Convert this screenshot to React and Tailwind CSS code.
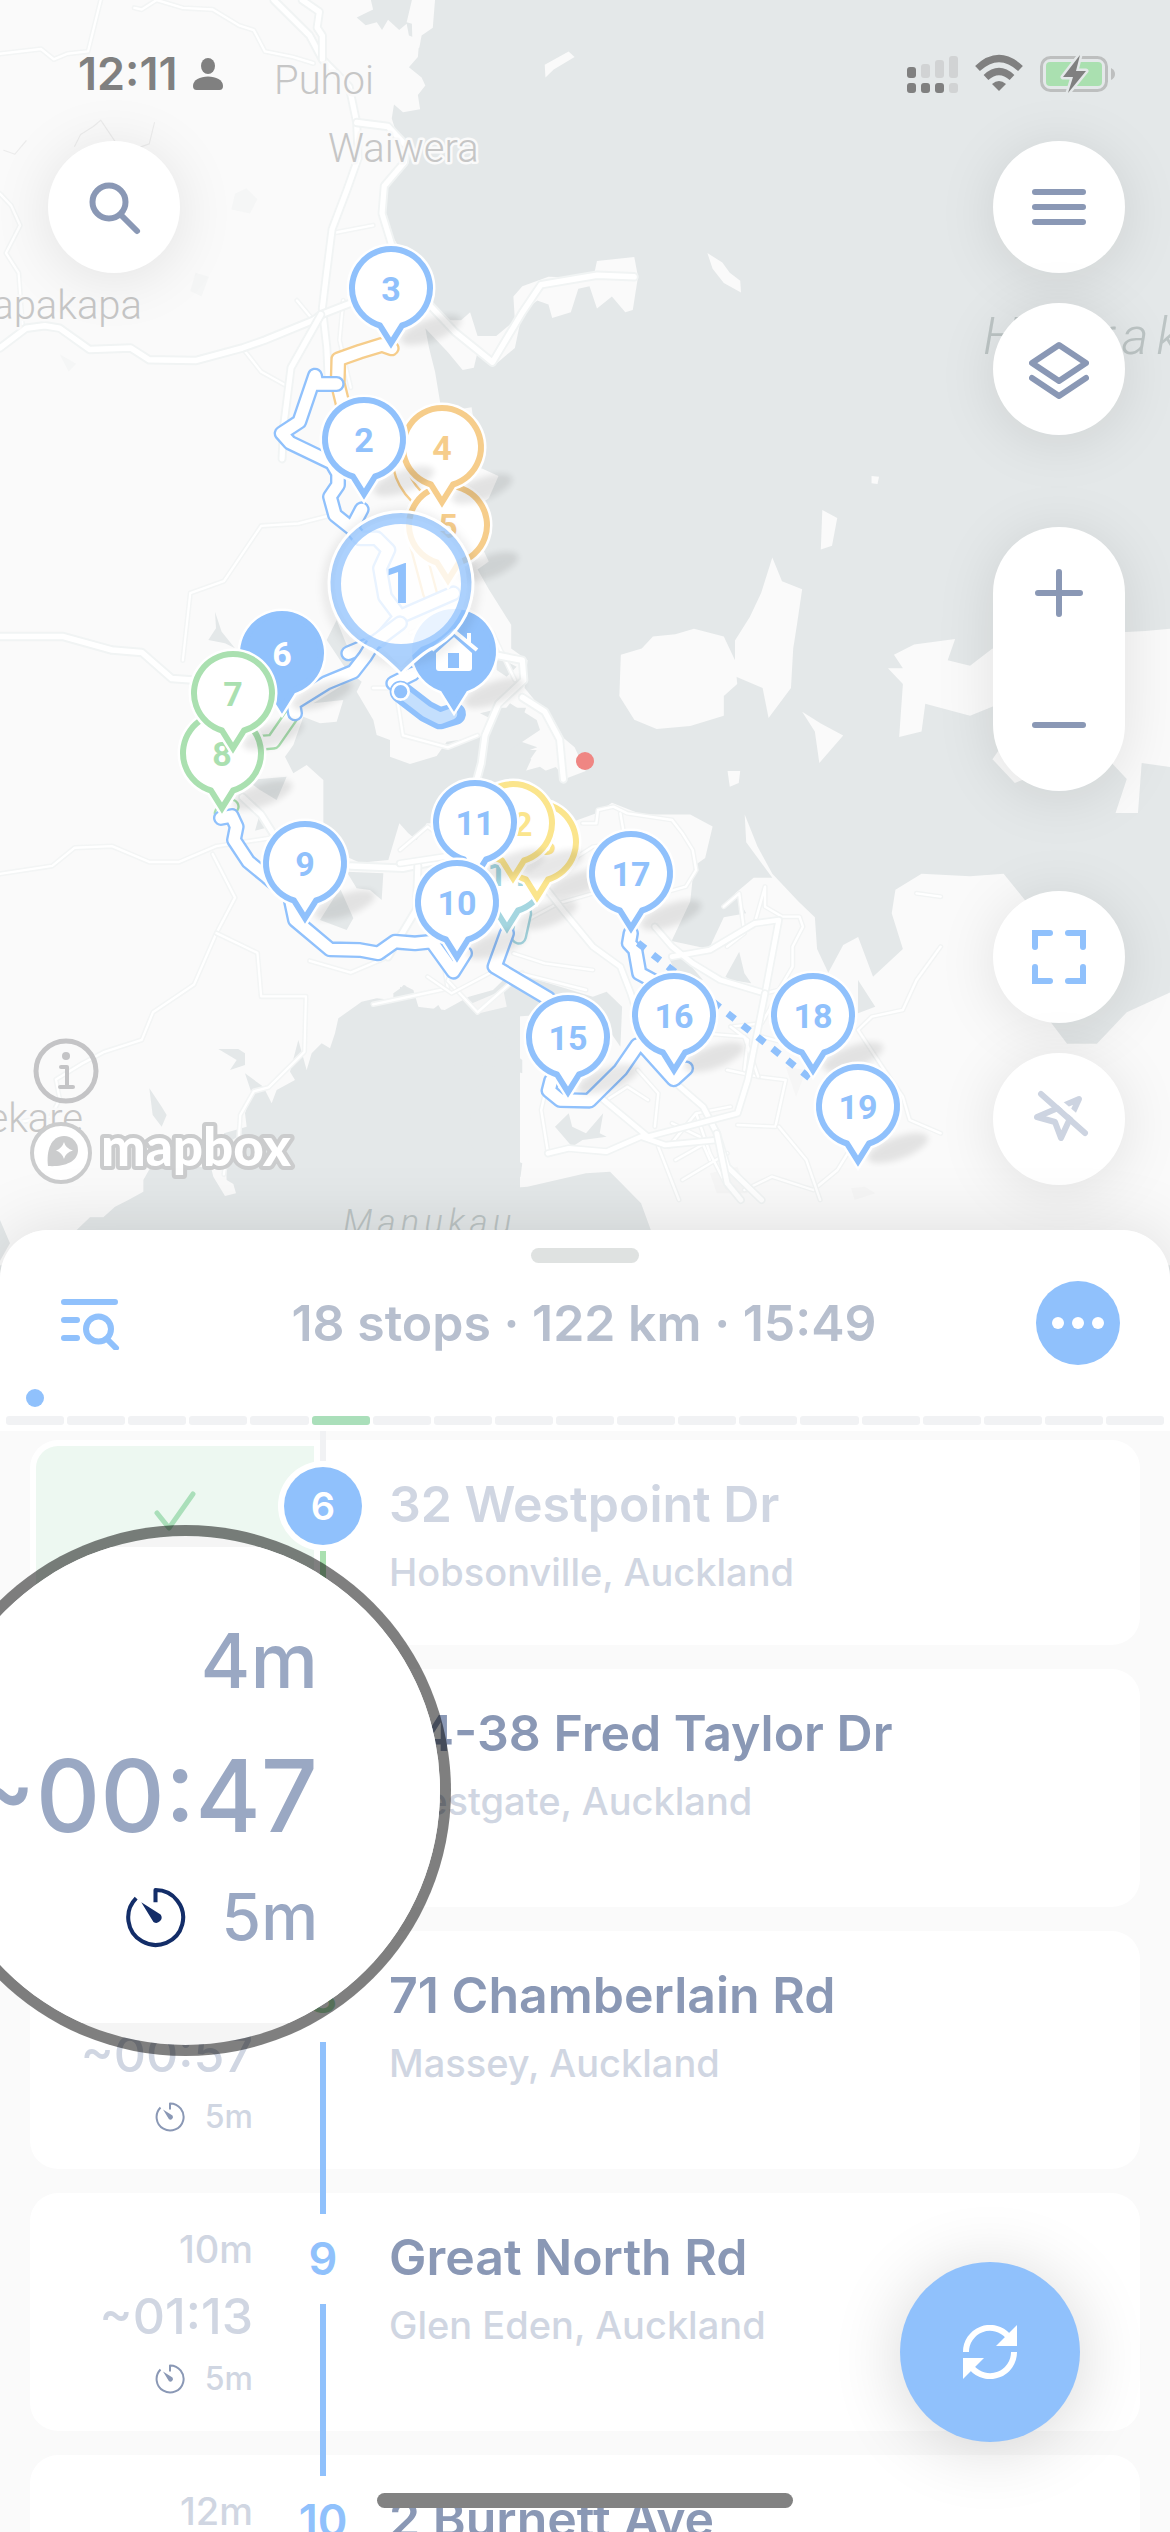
import React from "react";

const BLUE = "#90c1fc";
const GREEN = "#aae0b0";
const ORANGE = "#f6cd8b";
const YELLOW = "#fbe58d";
const TEAL = "#a5d6e0";
const SEA = "#e4e8e9";
const LAND = "#fafafa";

const pins = [
  { n: "14", x: 507, y: 873, c: TEAL },
  { n: "13", x: 537, y: 842, c: YELLOW },
  { n: "12", x: 513, y: 823, c: YELLOW },
  { n: "11", x: 475, y: 822, c: BLUE },
  { n: "10", x: 457, y: 902, c: BLUE },
  { n: "5", x: 448, y: 525, c: ORANGE },
  { n: "4", x: 442, y: 447, c: ORANGE },
  { n: "3", x: 391, y: 288, c: BLUE },
  { n: "2", x: 364, y: 439, c: BLUE },
  { n: "6", x: 282, y: 653, c: BLUE, solid: true },
  { n: "8", x: 222, y: 753, c: GREEN },
  { n: "7", x: 233, y: 693, c: GREEN },
  { n: "9", x: 305, y: 863, c: BLUE },
  { n: "17", x: 631, y: 873, c: BLUE },
  { n: "16", x: 674, y: 1015, c: BLUE },
  { n: "15", x: 568, y: 1037, c: BLUE },
  { n: "18", x: 813, y: 1015, c: BLUE },
  { n: "19", x: 858, y: 1106, c: BLUE },
  { n: "", x: 454, y: 651, c: BLUE, solid: true, home: true },
];

const PIN_SHAPE = "M-11 37.5A39 39 0 1 1 11 37.5L0 55Z";

function Pin({ n, x, y, c, solid, home }) {
  return (
    <g transform={`translate(${x} ${y})`}>
      <ellipse cx="40" cy="42" rx="32" ry="11" transform="rotate(-20 40 42)" fill="#000" opacity="0.09" filter="url(#soft)" />
      <path d={PIN_SHAPE} fill="#fff" stroke="#fff" strokeWidth="11" />
      <path d={PIN_SHAPE} fill={solid ? c : "#fff"} stroke={c} strokeWidth="6" />
      {home ? (
        <g>
          <path d="M-18 2 0-14 18 2V17a3 3 0 0 1-3 3H-15a3 3 0 0 1-3-3Z" fill="#fff" />
          <path d="M-22-1 0-20 23-1M15-8V-18" fill="none" stroke="#fff" strokeWidth="4" />
          <rect x="-6" y="2" width="11" height="15" fill={c} />
        </g>
      ) : (
        <text x="0" y="13" textAnchor="middle" fontSize="34" fontWeight="700" fill={solid ? "#fff" : c}>
          {n}
        </text>
      )}
    </g>
  );
}

const majorRoads = [
  "M367 0 415 45 432 75 468 110 478 155 480 200 465 240 445 290 437 350 432 390 438 440 440 480",
  "M405 0 428 15 425 35 432 45 432 75",
  "M478 155 520 160 545 185 542 205 515 235 512 270 525 310",
  "M0 440 35 415 60 412 80 415 120 442 175 440 200 455 262 456 325 440 355 430 420 405 430 398 520 365",
  "M430 398 390 465 380 540 378 580",
  "M0 805 85 805 150 822 190 825 230 858 258 860",
  "M560 370 610 420 660 458 700 395 725 360 800 348 850 350",
  "M620 820 700 835 702 860 668 890 650 930 645 965 635 1000 625 1040",
  "M700 882 730 900 750 935 755 985",
  "M470 1095 540 1098 590 1088",
  "M560 1095 558 1150 520 1210",
  "M325 1008 350 1030 370 1060",
];
const minorRoads = [
  "M135 0 118 65 90 68 72 75 55 62 0 68",
  "M180 10 190 12 210 0 245 10 285 12 320 32 340 38 355 65 392 72 420 80",
  "M0 245 15 260 27 285 8 320 25 345 30 410",
  "M398 380 420 405M325 440 350 470 388 490",
  "M460 380 455 430 470 490M445 295 500 285",
  "M245 835 255 750 300 735 350 665 400 662 450 650",
  "M0 1105 70 1095 100 1072 150 1070 200 1090 240 1090 290 1070 360 1060",
  "M285 1080 315 1135 290 1180 260 1245 205 1280 190 1315 140 1330 110 1345 75 1365 80 1390 68 1412 20 1420 0 1405",
  "M290 1180 345 1205 350 1260 410 1260 408 1330 360 1375 340 1380 322 1410 320 1440 305 1450 300 1485",
  "M520 1210 470 1230 415 1215M590 1190 600 1250 500 1270",
  "M630 1180 600 1240 640 1280 700 1230",
  "M500 870 530 870 540 930 600 945 640 930",
  "M550 800 600 780 660 800 690 860",
];

function MapArt() {
  return (
    <svg
      className="absolute inset-0 h-full w-full"
      viewBox="0 0 1170 1280"
      preserveAspectRatio="xMidYMin slice"
      fontFamily='Roboto, "Liberation Sans", sans-serif'
      role="img"
      aria-label="Route map of Auckland with numbered stops"
    >
      <defs>
        <filter id="soft" x="-50%" y="-80%" width="200%" height="260%">
          <feGaussianBlur stdDeviation="3" />
        </filter>
        <filter id="halo" x="-50%" y="-50%" width="200%" height="200%">
          <feGaussianBlur stdDeviation="5" />
        </filter>
      </defs>
      <rect width="1170" height="1280" fill={SEA} />

      <g transform="scale(.7462 .7908)" fill={LAND}>
        <path d="M0 0H497L500 12 478 22 490 32 505 28 512 38 520 25 535 38 545 30 548 45 562 50 560 72 548 85 565 98 570 108 560 120 563 138 540 142 528 132 525 150 535 180 540 212 522 225 512 250 512 280 530 305 575 385 600 405 618 405 630 395 640 425 665 425 690 405 688 375 700 362 735 350 795 352 800 330 850 325 855 350 848 392 838 395 820 375 800 390 790 362 775 365 765 395 740 402 735 385 720 380 700 395 690 440 665 460 640 445 635 465 620 468 600 445 570 415 575 440 583 470 590 510 615 520 612 540 640 590 668 602 655 630 640 640 640 680 655 710 640 720 655 745 685 790 685 820 707 835 703 870 725 895 745 925 770 945 785 975 757 985 745 970 700 985 712 960 690 955 720 945 690 935 705 895 670 895 655 935 640 1000 660 1040 700 1060 765 1040 800 1028 820 1015 860 1030 925 1030 955 1045 945 1085 930 1095 925 1140 900 1190 950 1200 970 1160 1000 1155 985 1130 1010 1110 1035 1110 1000 1065 998 1030 1015 1070 1035 1105 1070 1140 1092 1160 1095 1200 1110 1230 1130 1195 1150 1185 1170 1235 1210 1200 1195 1155 1200 1125 1235 1105 1300 1108 1345 1105 1375 1140 1400 1200 1420 1230 1390 1270 1430 1320 1470 1320 1510 1280 1568 1255V1600H0Z" />
        <path d="M552 0H583L580 35 565 45 562 60 553 65 552 30 545 28ZM730 82 762 65 770 72 742 88 731 98ZM948 320 968 332 978 345 992 355 993 370 970 358 955 340Z" />
        <path d="M832 828 860 820 875 805 905 802 930 795 970 805 985 835 988 865 970 880 970 905 925 918 880 922 850 910 830 880Z" />
        <path d="M985 810 1005 780 1020 750 1035 705 1048 735 1075 745 1068 790 1063 820 1060 870 1030 908 1022 870 985 855Z" />
        <path d="M1075 900 1100 915 1130 930 1098 965 1092 925ZM975 975 992 975 990 990 978 995ZM1102 645 1122 655 1115 690 1100 695ZM1168 602 1178 603 1176 612 1168 611ZM612 518 632 515 635 535 615 540Z" />
        <path d="M1190 845 1210 845 1198 828 1225 815 1280 808 1270 835 1300 842 1330 820 1350 835 1365 880 1300 905 1240 890 1235 925 1205 932 1210 865Z" />
        <path d="M1490 800 1535 798 1568 795V970L1530 965 1525 1028 1495 1028 1510 985 1500 975 1480 955 1440 960 1360 990 1330 960 1360 920 1340 830Z" />
      </g>

      <g transform="translate(160 560) scale(.33333)" fill={SEA}>
        <path d="M530 180 500 240 560 330 605 365 590 395 640 480 650 525 690 540 690 590 750 612 830 588 860 545 960 530 1010 480 1050 430 1130 480 1140 510 1050 570 1130 570 1085 635 1140 620 1200 662 1290 640 1320 560V740L1240 780 1130 800 1000 820 880 790 800 790 770 840 745 820 718 790 685 900 600 908 560 890 490 800 490 660 440 615 400 640 375 590 400 555 430 470 480 490 530 485 550 420 460 430 540 380 590 330Z" />
        <path d="M165 155 185 215 225 265 195 250 145 240 168 205ZM260 660 380 650 350 720 300 690ZM300 760 330 800 285 812ZM560 935 670 940 665 1020 630 990 590 985ZM540 985 580 1075 560 1110 480 1080ZM700 1300 735 1275 765 1320H700ZM1010 290 1070 320 1040 350 1010 330ZM960 460 1000 450 990 475Z" />
      </g>
      <g transform="translate(0 980) scale(.33333)" fill={SEA}>
        <path d="M-10 740 0 720 30 790-10 860ZM230 750 270 712 310 712 345 680 385 660 430 635 430 600 450 565 600 560 635 570 640 590 675 648 708 640 700 612 680 600 672 460 740 440 735 400 755 340 735 280 790 320 815 370 830 330 885 300 870 275 895 180 920 270 935 220 965 190 990 205 1005 160 1015 115 1085 65 1130 55 1180 60 1210 15 1240 30 1255 80 1290 95 1315 75 1330 100 1400 60 1560 80V900H100ZM655 207 715 207 735 220 735 255 690 270 710 240ZM448 325 485 380 500 405 485 440 458 405Z" />
      </g>
      <g transform="translate(400 760) scale(.34437 .33333)">
        <path fill={SEA} d="M0 680 20 690 50 740 130 750 200 710 270 690 300 660 370 650 560 710 600 695 645 740 640 860 600 800 480 760 330 770 265 800 270 830 310 850 330 880 355 900 355 940 290 920 160 910 155 940 210 990 260 960 300 980 270 1040 205 1060 200 1150 240 1190 310 1190 355 1210 350 1250 310 1285 370 1280 540 1240 610 1235 700 1330 760 1500H0Z" />
        <path fill={SEA} d="M450 1100 490 1060 500 1100 540 1120 590 1060 580 1120 600 1130 530 1140 500 1160ZM945 650 985 575 1000 640 1020 670 960 660ZM780 590 830 600 880 660 800 640ZM1330 660 1380 740 1330 760Z" />
        <path fill="#f6f6f6" d="M210 730 300 690 310 740 230 760ZM900 1240 980 1220 1010 1300 920 1300ZM1120 920 1180 930 1150 1010ZM1310 1285 1350 1280 1380 1300 1320 1320Z" />
      </g>

      <g transform="scale(.7462 .7908)" fill="none" strokeLinejoin="round" strokeLinecap="round">
        {[...minorRoads].map((d) => (
          <g key={d}>
            <path d={d} stroke="#f3f5f5" strokeWidth="7" />
            <path d={d} stroke="#fff" strokeWidth="3" />
          </g>
        ))}
        {majorRoads.map((d) => (
          <g key={d}>
            <path d={d} stroke="#f1f4f4" strokeWidth="12" />
            <path d={d} stroke="#fff" strokeWidth="7" />
          </g>
        ))}
        <path d="M100 185 108 170 125 160 135 152 155 180 170 192 200 182 207 155M5 190 20 195 35 178" stroke="#ececec" strokeWidth="1.5" />
        <path d="M315 245 330 238 345 252 335 270 310 265ZM262 345 280 350 270 375 255 368ZM80 448 102 460 92 470Z" fill="#f5f6f6" />
      </g>
      <g transform="translate(400 760) scale(.34437 .33333)" fill="none" strokeLinejoin="round" strokeLinecap="round">
        {[
          "M530 190 570 190 575 150 620 140 660 160 790 180 820 220 850 270 860 330 830 380 760 400M640 160 650 220 600 260M0 270 80 200 120 230M760 400 700 450M500 300 560 260 700 240",
          "M940 440 985 400 1000 520 950 560M1060 380 1060 440 1110 470 1160 470 1170 500 1140 560 1140 620 1100 690 1060 700M1060 380 1030 490",
          "M1570 410 1500 400M1570 560 1500 660 1460 750 1370 770 1330 810 1400 920 1460 1010 1480 1080 1570 1120",
          "M960 800 1050 790 1100 700M950 930 1040 950 1120 960 1090 1100 980 1095M780 1160 860 1060 960 1040M790 1090 870 1130 900 1200M750 1160 810 1320M860 1060 900 1180 950 1280M800 1200 920 1130M820 1260 950 1180M1000 1290 1080 1250 1200 1290 1270 1230 1300 1180",
          "M690 930 750 1000 740 1100M430 1180 410 1050 430 960M600 1020 660 980 720 1020M330 580 420 610 560 630M350 640 540 690M370 480 460 430 560 400M80 650 150 700 260 640M1100 1100 1180 1200 1220 1320",
          "M1000 930 1010 840 960 800M1050 830 1160 860M880 820 1000 830 1040 950",
        ].map((d) => (
          <g key={d}>
            <path d={d} stroke="#f2f4f4" strokeWidth="15" />
            <path d={d} stroke="#fff" strokeWidth="7" />
          </g>
        ))}
        {[
          "M0 310 130 290 290 310 420 380 480 460 560 560 640 620 670 700 700 800 790 960 880 1040 920 1120 950 1220 1050 1320",
          "M740 500 790 560 850 610 930 660 1060 700 1100 480 1030 490 900 570 790 590",
          "M430 1180 490 1165 600 1175 700 1130 770 1155 920 1140M580 1010 720 1130 980 1060 1010 960 1060 700",
          "M920 1120 950 1270 990 1320",
        ].map((d) => (
          <g key={d}>
            <path d={d} stroke="#f1f4f4" strokeWidth="24" />
            <path d={d} stroke="#fff" strokeWidth="14" />
          </g>
        ))}
      </g>

      <g fontSize="40" fill="#c6c6c6" stroke="#fafafa" strokeWidth="5" paintOrder="stroke" strokeLinejoin="round" fontWeight="300">
        <text x="274" y="94">Puhoi</text>
        <text x="328" y="162">Waiwera</text>
        <text x="142" y="319" textAnchor="end">apakapa</text>
        <text x="83" y="1132" textAnchor="end">ekare</text>
      </g>
      <g fill="#bcc4c4" fontStyle="italic" fontWeight="300">
        <text x="343" y="1234" fontSize="35" letterSpacing="5">Manukau</text>
        <text x="983" y="354" fontSize="52" letterSpacing="8">Hauraki</text>
      </g>

      <g fill="none" strokeLinejoin="round" strokeLinecap="round">
        {[
          ["translate(200 220) scale(.33333)", ORANGE, "M575 385 545 375 480 395 415 418 413 490 430 560M600 740 Q610 790 650 830M650 970 690 1120"],
          ["translate(200 220) scale(.33333)", BLUE, "M410 492 350 492 345 467 298 605 245 640 270 668 395 728 414 760 414 795 390 830 405 885 455 925 485 868M455 925 480 955 530 955 565 990 540 1045 555 1130 600 1190 760 1120M600 1190 540 1260 445 1300"],
          ["translate(160 560) scale(.33333)", GREEN, "M392 470 340 545 280 550M185 760 215 740"],
          ["translate(160 560) scale(.33333)", BLUE, "M720 190 640 250 615 290 580 335 500 368 400 430 405 460M183 774 215 768 230 800 222 840 265 905 320 950 390 1010 405 1080 510 1168 600 1170 655 1180 705 1145 765 1150 815 1145 880 1235 915 1180M700 370 760 340"],
          ["translate(400 760) scale(.34437 .33333)", TEAL, "M330 480 360 460 345 530"],
          ["translate(400 760) scale(.34437 .33333)", BLUE, "M310 520 275 620 430 715 470 800M440 960 432 992 465 1020 550 1022 640 930 690 855M710 860 795 958 830 925M670 520 665 550 683 570 695 640 740 665 790 720"],
        ].map(([t, c, d], i) => (
          <g key={i} transform={t}>
            <path d={d} stroke={c} strokeWidth="48" />
            <path d={d} stroke="#fff" strokeWidth="34" />
          </g>
        ))}
        <path d="M638 943 815 1082" stroke={BLUE} strokeWidth="7" strokeDasharray="9 10" strokeLinecap="butt" />
        <g transform="translate(160 560) scale(.33333)">
          <path d="M722 395 800 455 840 475 885 462" stroke={BLUE} strokeWidth="66" />
          <path d="M722 395 800 455 840 475 875 462" stroke="#c4dffd" strokeWidth="34" />
          <circle cx="722" cy="395" r="24" fill={BLUE} stroke="#fff" strokeWidth="8" />
        </g>
      </g>
      <circle cx="585" cy="761" r="9" fill="#ef8683" />

      {pins.map((p, i) => (
        <Pin key={i} {...p} />
      ))}

      <g transform="translate(401 584)">
        <circle cx="0" cy="3" r="74" fill="none" stroke="#000" strokeOpacity=".12" strokeWidth="5" filter="url(#halo)" />
        <path d="M-20 63A66 66 0 1 1 20 63L0 82Z" fill="#fff" fillOpacity=".8" />
        <path d="M-32 64A72 72 0 1 1 32 64Q22 68 0 90Q-22 68-32 64Z M60 0A60 60 0 1 0-60 0A60 60 0 1 0 60 0Z" fillRule="evenodd" fill={BLUE} fillOpacity=".75" />
        <path d="M-32 64A72 72 0 1 1 32 64Q22 68 0 90Q-22 68-32 64Z" fill="none" stroke="#fff" strokeWidth="3" />
        <text x="-1" y="19" textAnchor="middle" fontSize="56" fontWeight="700" fill={BLUE}>1</text>
      </g>
    </svg>
  );
}

function StatusBar() {
  return (
    <div className="flex items-center justify-between pt-[44px] pr-[55px] pl-[78px] text-[#808080]">
      <div className="flex h-[60px] items-center gap-4">
        <span className="text-[45px] leading-[60px] font-semibold">12:11</span>
        <svg width="30" height="32" viewBox="0 0 30 32" fill="currentColor" aria-hidden="true">
          <ellipse cx="15" cy="8" rx="7" ry="8" />
          <path d="M0 28C0 22 7 18.500 15 18.500S30 22 30 28Q30 32 26.500 32H3.500Q0 32 0 28Z" />
        </svg>
      </div>
      <svg width="209" height="40" viewBox="0 0 209 40" fill="#808080" aria-hidden="true">
        <rect x="1" y="13" width="9" height="11" rx="3" />
        <g fill="#d1d3d4">
          <rect x="15" y="10" width="9" height="14" rx="3" />
          <rect x="29" y="6" width="9" height="18" rx="3" />
          <rect x="43" y="2" width="9" height="22" rx="3" />
          <rect x="43" y="29" width="9" height="10" rx="3" />
        </g>
        <rect x="1" y="29" width="9" height="10" rx="3" />
        <rect x="15" y="29" width="9" height="10" rx="3" />
        <rect x="29" y="29" width="9" height="10" rx="3" />
        <g fill="none" stroke="#808080" strokeWidth="7">
          <path d="M71.500 14.500Q93-5.500 114.500 14.500" />
          <path d="M80 23.500Q93 11.500 106 23.500" />
        </g>
        <path d="M86 30Q93 24 100 30L93 37Z" />
        <rect x="135.500" y="3.500" width="65" height="33" rx="9" fill="none" stroke="#bdbfbf" strokeWidth="3" />
        <path d="M205 14Q209 16 209 20T205 26Z" fill="#bdbfbf" />
        <rect x="140" y="8" width="56" height="24" rx="4" fill="#aae0b0" />
        <path d="M174 1 157 23H167L162 39 180 17H170Z" stroke={SEA} strokeWidth="5" paintOrder="stroke" strokeLinejoin="round" />
      </svg>
    </div>
  );
}

const ROUND =
  "flex size-[132px] items-center justify-center rounded-full bg-white text-[#8a98b5] shadow-[0_6px_60px_rgba(0,0,0,0.1)]";

function Icon({ children, width = 6 }) {
  return (
    <svg width="60" height="60" viewBox="0 0 60 60" fill="none" stroke="currentColor" strokeWidth={width} strokeLinecap="round" strokeLinejoin="round" aria-hidden="true">
      {children}
    </svg>
  );
}

function MapControls() {
  return (
    <div className="relative flex items-start justify-between pt-[37px] pr-[45px] pl-[48px]">
      <button className={ROUND} aria-label="Search">
        <Icon><circle cx="25" cy="25" r="16.500" /><path d="M37 38 53 54" /></Icon>
      </button>
      <div className="flex flex-col">
        <button className={ROUND} aria-label="Menu">
          <Icon><path d="M6 15H54M6 30H54M6 45H54" /></Icon>
        </button>
        <button className={ROUND + " mt-[30px]"} aria-label="Map layers">
          <Icon><path d="M30 6 57 24 30 42 3 24ZM3 39 30 57 57 39" /></Icon>
        </button>
        <div className="mt-[92px] flex w-[132px] flex-col rounded-full bg-white text-[#8a98b5] shadow-[0_6px_60px_rgba(0,0,0,0.1)]">
          <button className="flex h-[132px] items-center justify-center" aria-label="Zoom in">
            <Icon><path d="M9 30H51M30 9V51" /></Icon>
          </button>
          <button className="flex h-[132px] items-center justify-center" aria-label="Zoom out">
            <Icon><path d="M6 30H54" /></Icon>
          </button>
        </div>
        <button className={ROUND + " mt-[100px]"} aria-label="Fit route">
          <svg width="60" height="60" viewBox="0 0 60 60" fill="none" stroke={BLUE} strokeWidth="6" strokeLinecap="round" aria-hidden="true">
            <path d="M6 20V6H21M39 6H54V20M54 40V54H39M21 54H6V40" />
          </svg>
        </button>
        <button className={ROUND + " mt-[30px]"} aria-label="Location off">
          <svg width="60" height="60" viewBox="0 0 60 60" fill="none" stroke="#cdd4e1" strokeWidth="6" strokeLinejoin="round" aria-hidden="true">
            <path d="M8 28 50 10 32 49 26 33Z" />
            <path d="M16 1 60 39" stroke="#fff" strokeWidth="6" />
            <path d="M12 5 56 44" strokeLinecap="round" />
          </svg>
        </button>
      </div>
    </div>
  );
}

function Attribution() {
  return (
    <div className="absolute top-[1038px] left-[29px] flex flex-col gap-[17px]">
      <button aria-label="Map information" className="ml-1 size-[66px]">
        <svg width="66" height="66" viewBox="0 0 66 66" fill="none" stroke="#c4c4c6" strokeWidth="4" strokeLinecap="round" strokeLinejoin="round" aria-hidden="true">
          <circle cx="33" cy="33" r="30" strokeWidth="5" />
          <circle cx="33" cy="18" r="4" fill="#c4c4c6" stroke="none" />
          <path d="M28 29H34V49M27 49H40" />
        </svg>
      </button>
      <a href="#mapbox" className="block">
        <svg width="270" height="64" viewBox="0 0 270 64" role="img" aria-label="mapbox">
          <circle cx="32" cy="32" r="29" fill="#fff" stroke="#cbcccd" strokeWidth="4" />
          <path d="M19 45C17 30 22 15 35 15A14 14 0 0 1 49 29C49 42 33 46 19 45Z" fill="#cbcccd" />
          <path d="M35 21Q36.500 27.500 44 29.500Q36.500 31.500 35 38Q33 31.500 27 29.500Q33 27.500 35 21Z" fill="#fff" />
          <text x="72" y="45" fontFamily="Lato, sans-serif" fontWeight="900" fontSize="53" fill="#fff" stroke="#cbcccd" strokeWidth="8" strokeLinejoin="round" paintOrder="stroke">mapbox</text>
        </svg>
      </a>
    </div>
  );
}

function TimerIcon({ className }) {
  return (
    <svg className={className} viewBox="0 0 30 30" fill="none" stroke="currentColor" strokeWidth="2" aria-hidden="true">
      <path d="M15 7.500V1.500A13.500 13.500 0 1 1 5.500 5.500" strokeLinejoin="round" />
      <path d="M8 7.500 17.500 13.500A2.600 2.600 0 0 1 14 17.200Z" fill="currentColor" stroke="none" />
    </svg>
  );
}

function SheetHeader() {
  return (
    <header className="rounded-t-[48px] bg-white pt-[18px] pb-1.5">
      <div className="mx-auto h-[15px] w-[108px] rounded-full bg-[#dfe2e1]" />
      <div className="mt-[18px] grid grid-cols-[1fr_auto_1fr] items-center pr-[50px] pl-[48px]">
        <button className="flex size-[84px] items-center justify-center" aria-label="Search stops">
          <svg width="60" height="54" viewBox="0 0 60 54" fill="none" stroke={BLUE} strokeWidth="6" strokeLinecap="round" aria-hidden="true">
            <path d="M4 6H55M4 24H17M4 42H17M48 44 56 52" />
            <circle cx="38.500" cy="33" r="12.500" />
          </svg>
        </button>
        <h1 className="text-[50px] leading-[60px] font-semibold text-[#b7bfce]">18 stops · 122 km · 15:49</h1>
        <button className="flex size-[84px] items-center justify-center gap-2 justify-self-end rounded-full bg-[#90c1fc]" aria-label="More">
          <span className="size-3 rounded-full bg-white" />
          <span className="size-3 rounded-full bg-white" />
          <span className="size-3 rounded-full bg-white" />
        </button>
      </div>
      <div className="mt-6 ml-[26px] size-[18px] rounded-full bg-[#90c1fc]" />
      <div className="mt-[9px] flex gap-[3px] px-1.5">
        {Array.from({ length: 19 }, (_, i) => (
          <div key={i} className={"h-[9px] flex-1 rounded-[3px] " + (i === 5 ? "bg-[#aadfba]" : "bg-[#f1f2f4]")} />
        ))}
      </div>
    </header>
  );
}

const stops = [
  { n: 7, title: "34-38 Fred Taylor Dr", area: "Westgate, Auckland", drive: "4m", eta: "~00:47", num: "text-[#aae0b0]", line: "bg-[#aae0b0]" },
  { n: 8, title: "71 Chamberlain Rd", area: "Massey, Auckland", drive: "5m", eta: "~00:57", num: "text-[#aae0b0]", line: "bg-[#90c1fc]" },
  { n: 9, title: "Great North Rd", area: "Glen Eden, Auckland", drive: "10m", eta: "~01:13", num: "text-[#90c1fc]", line: "bg-[#90c1fc]" },
  { n: 10, title: "2 Burnett Ave", area: "Mount Roskill, Auckland", drive: "12m", eta: "~01:30", num: "text-[#90c1fc]", line: "bg-[#90c1fc]" },
];

function StopText({ title, area, dim }) {
  return (
    <div className="min-w-0 flex-1 pt-8 pl-[27px]">
      <h2 className={"text-[50px] leading-[64px] font-semibold whitespace-nowrap " + (dim ? "text-[#d0d6e2]" : "text-[#8a98b5]")}>{title}</h2>
      <p className="mt-3 text-[38px] leading-[48px] font-medium whitespace-nowrap text-[#d0d6e2]">{area}</p>
    </div>
  );
}

function StopList() {
  return (
    <ol className="flex flex-col gap-6 bg-[#fafafa] px-[30px] pt-[9px]">
      <li className="relative flex h-[205px] rounded-[28px] bg-white">
        <div className="m-1.5 mr-0 flex w-[278px] justify-center rounded-l-[22px] bg-[#edf8f1] pt-[44px]">
          <svg width="42" height="42" viewBox="0 0 42 42" fill="none" stroke="#aadfba" strokeWidth="5" strokeLinecap="round" strokeLinejoin="round" aria-label="Done">
            <path d="M3 23 15 38 39 4" />
          </svg>
        </div>
        <div className="relative -ml-[30px] flex w-[78px] flex-col items-center pt-[27px]">
          <div className="absolute -top-[9px] h-[30px] w-1.5 bg-[#f1f2f4]" />
          <div className="relative flex size-[78px] items-center justify-center rounded-full bg-[#90c1fc] text-[38px] font-semibold text-white ring-6 ring-white">6</div>
          <div className="absolute top-[111px] -bottom-[45px] z-10 w-1.5 bg-[#aae0b0]" />
        </div>
        <StopText title="32 Westpoint Dr" area="Hobsonville, Auckland" dim />
      </li>
      {stops.map((s) => (
        <li key={s.n} className="flex h-[238px] shrink-0 rounded-[28px] bg-white">
          <div className="flex w-[223px] flex-col gap-3 pt-8 text-right font-medium text-[#d0d6e2]">
            <div className="text-[38px] leading-[48px]">{s.drive}</div>
            <div className="text-[50px] leading-[62px]">{s.eta}</div>
            <div className="flex items-center justify-end gap-5 text-[32px] leading-[40px]">
              <TimerIcon className="size-[30px] text-[#8a98b5]" />
              5m
            </div>
          </div>
          <div className="relative ml-[31px] flex w-[78px] flex-col items-center pt-[21px]">
            <div className={"flex h-[90px] items-center text-[45px] font-semibold " + s.num}>{s.n}</div>
            <div className={"absolute top-[111px] -bottom-[45px] z-10 w-1.5 " + s.line} />
          </div>
          <StopText title={s.title} area={s.area} />
        </li>
      ))}
    </ol>
  );
}

function Magnifier() {
  return (
    <div className="absolute top-[295px] -left-[80px] z-20 size-[531px] overflow-hidden rounded-full border-[11px] border-black/50 bg-[#f5f5f5] bg-clip-padding">
      <div className="mt-[11px] flex h-[476px] flex-col bg-white pt-[65px] pr-[122px] text-right font-medium whitespace-nowrap text-[#9aa8c3]">
        <div className="flex h-[96px] items-center justify-end text-[76px]">4m</div>
        <div className="mt-4 flex h-[140px] items-center justify-end pt-1 text-[100px]">~00:47</div>
        <div className="flex h-[106px] items-center justify-end gap-9 text-[64px]">
          <TimerIcon className="size-[61px] text-[#132d68]" />
          5m
        </div>
      </div>
    </div>
  );
}

export default function App() {
  return (
    <div className='relative flex h-screen flex-col overflow-hidden bg-[#fafafa] font-[Inter,"Noto_Sans",sans-serif]'>
      <section className="relative h-[1280px] shrink-0 overflow-hidden">
        <MapArt />
        <div className="relative">
          <StatusBar />
          <MapControls />
        </div>
        <Attribution />
      </section>
      <main className="relative -mt-[50px] rounded-t-[48px] shadow-[0_0_70px_rgba(0,0,0,0.12)]">
        <SheetHeader />
        <StopList />
        <Magnifier />
      </main>
      <button
        className="absolute right-[90px] bottom-[90px] z-20 flex size-[180px] items-center justify-center rounded-full bg-[#90c1fc] shadow-[0_6px_70px_rgba(0,0,0,0.16)]"
        aria-label="Optimise route"
      >
        <svg width="54" height="54" viewBox="0 0 54 54" fill="none" stroke="#fff" strokeWidth="6" aria-hidden="true">
          <path d="M3 27A24 24 0 0 1 45 11M51 27A24 24 0 0 1 9 43" />
          <path d="M54 0V21H33ZM0 54V33H21Z" fill="#fff" stroke="none" />
        </svg>
      </button>
      <div className="absolute bottom-6 left-1/2 z-20 h-[15px] w-[416px] -translate-x-1/2 rounded-full bg-[#828282]" />
    </div>
  );
}
